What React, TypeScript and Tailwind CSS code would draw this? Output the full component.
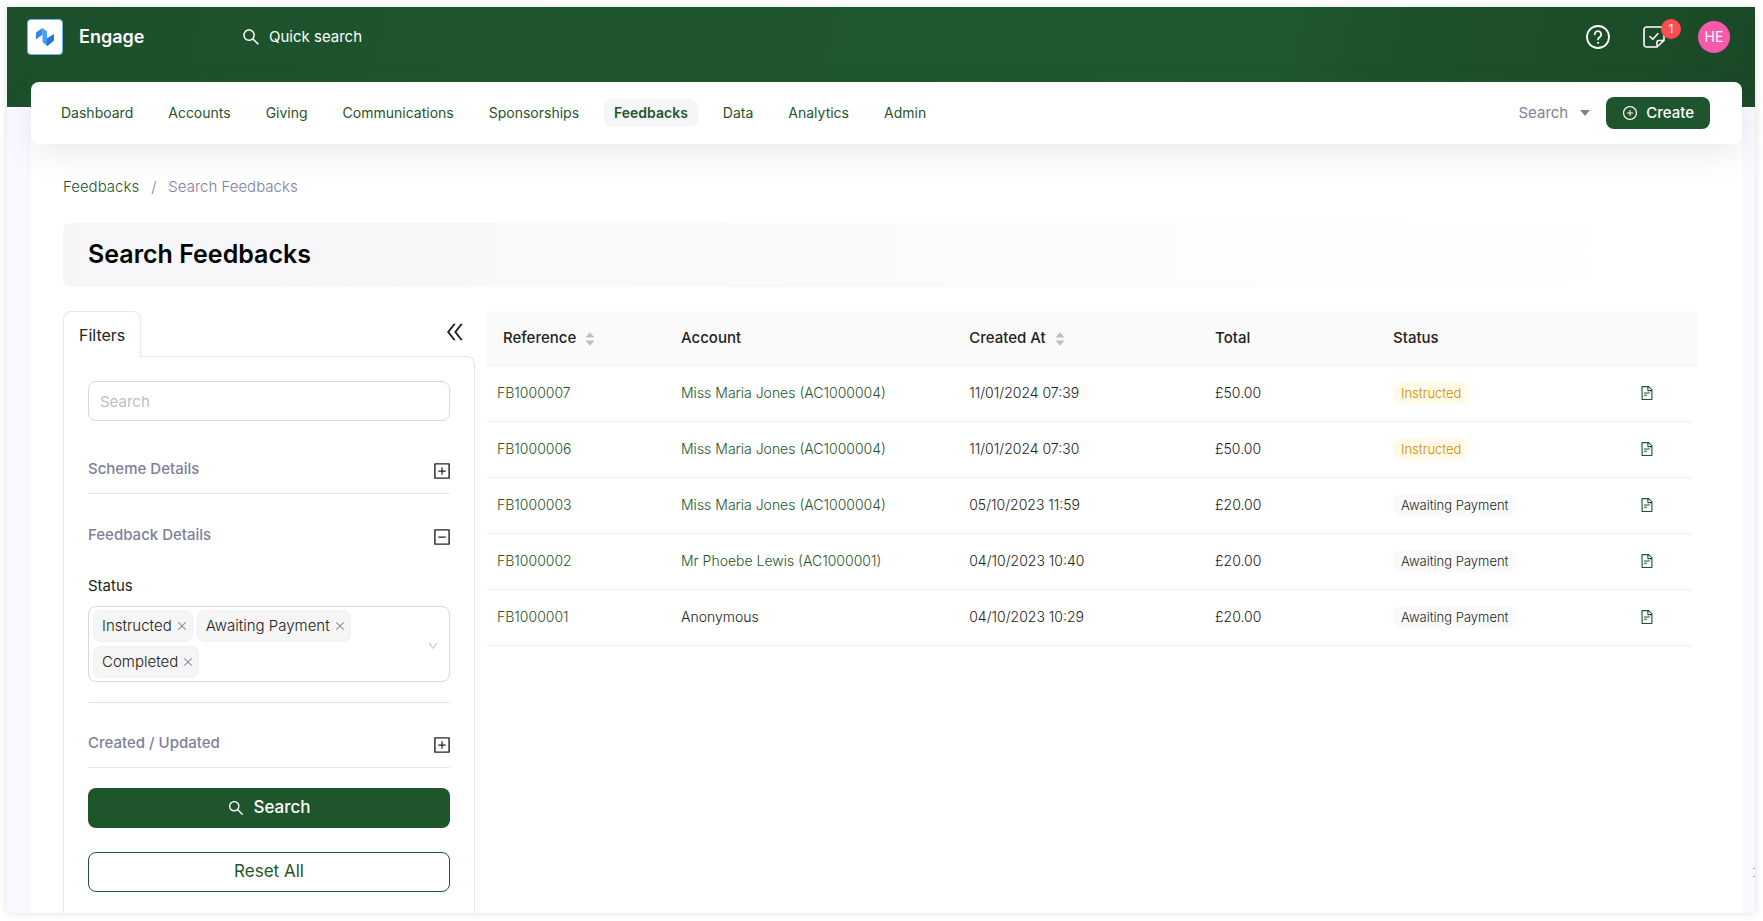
import {
  AiFillCaretDown,
  AiFillCaretUp,
  AiOutlineClose,
  AiOutlineDoubleLeft,
  AiOutlineDown,
  AiOutlineFileText,
  AiOutlineMinusSquare,
  AiOutlinePlusCircle,
  AiOutlinePlusSquare,
  AiOutlineSearch,
} from "react-icons/ai"

const navItems = [
  "Dashboard",
  "Accounts",
  "Giving",
  "Communications",
  "Sponsorships",
  "Feedbacks",
  "Data",
  "Analytics",
  "Admin",
]

const statusTags = ["Instructed", "Awaiting Payment", "Completed"]

const rows = [
  { ref: "FB1000007", account: "Miss Maria Jones (AC1000004)", created: "11/01/2024 07:39", total: "£50.00", status: "Instructed" },
  { ref: "FB1000006", account: "Miss Maria Jones (AC1000004)", created: "11/01/2024 07:30", total: "£50.00", status: "Instructed" },
  { ref: "FB1000003", account: "Miss Maria Jones (AC1000004)", created: "05/10/2023 11:59", total: "£20.00", status: "Awaiting Payment" },
  { ref: "FB1000002", account: "Mr Phoebe Lewis (AC1000001)", created: "04/10/2023 10:40", total: "£20.00", status: "Awaiting Payment" },
  { ref: "FB1000001", account: "Anonymous", created: "04/10/2023 10:29", total: "£20.00", status: "Awaiting Payment" },
]

function Logo() {
  return (
    <svg viewBox="0 0 18 18" className="size-[18px]" aria-hidden>
      <path d="M0 4.500 6.500 0v6.500L0 11.500z" fill="#2f86ea" />
      <path d="M6.500 0 11 3.500v14.500L6.500 14z" fill="#3ea2fb" />
      <path d="M11 10.500 18 6v6.500L11.500 18H11z" fill="#1f74d6" />
    </svg>
  )
}

function HelpIcon() {
  return (
    <svg viewBox="0 0 24 24" className="size-6" fill="none" stroke="currentColor" strokeWidth="1.800" strokeLinecap="round" aria-hidden>
      <circle cx="12" cy="12" r="11" />
      <path d="M8.800 9.300a3.200 3.200 0 1 1 5 2.700c-1.200.8-1.800 1.200-1.800 2.400" />
      <circle cx="12" cy="17.800" r="0.600" fill="currentColor" strokeWidth="1" />
    </svg>
  )
}

function TasksIcon() {
  return (
    <svg viewBox="0 0 22 22" className="size-[22px]" fill="none" stroke="currentColor" strokeWidth="1.600" strokeLinecap="round" strokeLinejoin="round" aria-hidden>
      <path d="M13.500 21H3.500A2.500 2.500 0 0 1 1 18.500v-15A2.500 2.500 0 0 1 3.500 1h15A2.500 2.500 0 0 1 21 3.500v11L14 21v-4.500a2 2 0 0 1 2-2h5" />
      <path d="m7 10.500 2.800 2.800 5-5.600" />
    </svg>
  )
}

function Header() {
  return (
    <header className="h-[100px] bg-[linear-gradient(105deg,#1c4f2a_0%,#1e552d_25%,#1f582e_72%,#1d522b_78%,#1b4927_100%)] text-white">
      <div className="flex h-[60px] items-center pl-5 pr-[25px]">
        <div className="flex w-[214px] items-center gap-4">
          <a href="#" aria-label="Home" className="flex size-9 items-center justify-center rounded border border-[#6db5f8] bg-white">
            <Logo />
          </a>
          <span className="text-lg font-semibold">Engage</span>
        </div>
        <button type="button" className="flex items-center gap-2 text-[15px]">
          <AiOutlineSearch className="size-5" />
          Quick search
        </button>
        <div className="ml-auto flex items-center gap-[33px]">
          <button type="button" aria-label="Help">
            <HelpIcon />
          </button>
          <button type="button" aria-label="Tasks" className="relative">
            <TasksIcon />
            <span className="absolute -right-4 -top-[7px] flex size-5 items-center justify-center rounded-full bg-[#ff4d4f] text-xs">1</span>
          </button>
          <button type="button" className="flex size-8 items-center justify-center rounded-full bg-[#f759ab] text-sm">
            HE
          </button>
        </div>
      </div>
    </header>
  )
}

function Navigation() {
  return (
    <nav className="relative z-10 flex h-[62px] items-center justify-between rounded-lg bg-white pl-5 pr-8 shadow-[0_10px_30px_rgba(82,100,120,0.12)]">
      <ul className="flex items-center gap-[15px] text-sm text-[#1f552d]">
        {navItems.map((item) => (
          <li key={item}>
            <a
              href="#"
              className={
                item === "Feedbacks"
                  ? "block rounded-lg bg-[#f6f6f9] px-2.5 py-1 font-semibold"
                  : "block px-2.5 py-1"
              }
            >
              {item}
            </a>
          </li>
        ))}
      </ul>
      <div className="flex items-center gap-4">
        <button type="button" className="flex items-center gap-3 text-[15px] text-[#7e7f9a]">
          Search
          <svg viewBox="0 0 10 6" className="h-1.5 w-2.5" fill="currentColor" aria-hidden>
            <path d="M0 0h10L5 6z" />
          </svg>
        </button>
        <button type="button" className="flex h-8 items-center gap-2 rounded-lg bg-[#1f552d] px-4 text-[15px] font-medium text-white">
          <AiOutlinePlusCircle className="size-4" />
          Create
        </button>
      </div>
    </nav>
  )
}

function FilterSection({ title, open = false }: { title: string; open?: boolean }) {
  const Icon = open ? AiOutlineMinusSquare : AiOutlinePlusSquare
  return (
    <button type="button" aria-expanded={open} className="flex w-full items-center justify-between text-[15px]/5 font-medium text-[#7e7f9a]">
      {title}
      <Icon className="-mr-0.5 mt-1 size-5 text-[#222]" />
    </button>
  )
}

function Filters() {
  return (
    <aside className="flex w-[412px] shrink-0 flex-col">
      <div className="flex h-[45px] items-end justify-between pr-2">
        <h2 className="z-10 -mb-px flex h-[46px] items-center rounded-t-lg border border-b-0 border-[#e6e6f0] bg-white px-[15px] text-base text-[#222]">
          Filters
        </h2>
        <button type="button" aria-label="Collapse filters" className="pb-3 text-[#222]">
          <AiOutlineDoubleLeft className="size-6" />
        </button>
      </div>
      <form className="flex-1 rounded-tr-lg border border-b-0 border-[#e6e6f0] px-6 pt-6 pb-5" onSubmit={(e) => e.preventDefault()}>
        <input
          type="text"
          aria-label="Search"
          placeholder="Search"
          className="h-10 w-full rounded-lg border border-[#d9d9d9] px-[11px] text-[15px] placeholder:text-[#bfbfbf]"
        />
        <div className="mt-9 border-b border-[#e6e6ee] pb-3">
          <FilterSection title="Scheme Details" />
        </div>
        <div className="mt-[29px] border-b border-[#e6e6ee] pb-5">
          <FilterSection title="Feedback Details" open />
          <div id="status-label" className="mt-[29px] text-[15px]/5 text-[#222]">
            Status
          </div>
          <div role="group" aria-labelledby="status-label" className="mt-2.5 flex items-center justify-between rounded-lg border border-[#d9d9d9] px-1 py-[3px]">
            <div className="flex flex-wrap gap-1">
              {statusTags.map((tag) => (
                <span key={tag} className="flex h-8 items-center gap-1 rounded-lg border border-[#f0f0f0] bg-[#f5f5f5] pl-2 pr-1 text-[15px] font-light text-[#222]">
                  {tag}
                  <button type="button" aria-label={`Remove ${tag}`} className="text-[#8c8c8c]">
                    <AiOutlineClose className="size-3" />
                  </button>
                </span>
              ))}
            </div>
            <button type="button" aria-label="Show statuses" className="px-1.5 text-[#bfbfbf]">
              <AiOutlineDown className="mt-1 size-3" />
            </button>
          </div>
        </div>
        <div className="mt-7 border-b border-[#e6e6ee] pb-3">
          <FilterSection title="Created / Updated" />
        </div>
        <button type="submit" className="mt-5 flex h-10 w-full items-center justify-center gap-2 rounded-lg bg-[#1f552d] text-[17px] font-medium text-white">
          <AiOutlineSearch className="size-[18px]" />
          Search
        </button>
        <button type="reset" className="mt-6 h-10 w-full rounded-lg border border-[#1f552d] text-[17px] text-[#1f552d]">
          Reset All
        </button>
      </form>
    </aside>
  )
}

function SortIcon() {
  return (
    <span className="ml-2 inline-flex flex-col align-middle text-[#bfbfbf]">
      <AiFillCaretUp className="size-3" />
      <AiFillCaretDown className="-mt-1 size-3" />
    </span>
  )
}

function FeedbackTable() {
  return (
    <table className="w-full table-fixed self-start text-left text-sm text-[#222]">
      <thead className="bg-[#fafafa]">
        <tr className="h-[54px] text-[15px] [&>th]:border-b [&>th]:border-[#f0f0f0] [&>th]:px-4 [&>th]:font-medium">
          <th className="w-[14.7%]">
            Reference
            <SortIcon />
          </th>
          <th className="w-[23.8%]">Account</th>
          <th className="w-[20.3%]">
            Created At
            <SortIcon />
          </th>
          <th className="w-[14.7%]">Total</th>
          <th className="w-[20.5%]">Status</th>
          <th aria-label="Details" />
          <th className="w-1.5 !px-0" aria-hidden />
        </tr>
      </thead>
      <tbody className="font-light">
        {rows.map((row) => (
          <tr key={row.ref} className="h-14 [&>td]:border-b [&>td]:border-[#f0f0f0] [&>td]:px-4">
            <td className="!px-2.5">
              <a href="#" className="text-[#1f552d]">{row.ref}</a>
            </td>
            <td>
              {row.account === "Anonymous" ? row.account : <a href="#" className="text-[#1f552d]">{row.account}</a>}
            </td>
            <td>{row.created}</td>
            <td>{row.total}</td>
            <td>
              <span
                className={
                  row.status === "Instructed"
                    ? "inline-block rounded-lg bg-[#fffbe6] px-2 text-[13px]/[22px] text-[#d48806]"
                    : "inline-block rounded-lg bg-[#fafafa] px-2 text-[13px]/[22px]"
                }
              >
                {row.status}
              </span>
            </td>
            <td>
              <a href="#" aria-label={`Open ${row.ref}`} className="-ml-0.5 block w-4 text-[#1f552d]">
                <AiOutlineFileText className="size-4" />
              </a>
            </td>
            <td className="!border-0 !p-0" />
          </tr>
        ))}
      </tbody>
    </table>
  )
}

export default function App() {
  return (
    <div className="flex min-h-screen flex-col bg-white pt-[7px] pr-2 pb-2 pl-[7px] font-['Inter','Open_Sans',sans-serif]">
      <div className="relative flex flex-1 flex-col bg-[#f9f9ff] shadow-[0_0_8px_rgba(0,0,0,0.12)]">
        <Header />
        <div className="-mt-[25px] ml-6 mr-[13px] flex flex-1 flex-col">
          <Navigation />
          <main className="-mt-2 flex flex-1 flex-col bg-white px-8 pt-[41px]">
            <div className="flex items-center gap-3 text-[15px]/5 font-light text-[#7e7f9a]">
              <a href="#" className="text-[#1f552d]">Feedbacks</a>
              <span>/</span>
              <span>Search Feedbacks</span>
            </div>
            <h1 className="mt-[26px] flex h-16 items-center rounded-lg bg-linear-to-r from-[#f6f6f9] to-white px-[25px] text-[25px] font-semibold text-black">
              Search Feedbacks
            </h1>
            <div className="mt-6 flex flex-1 gap-3 pr-3">
              <Filters />
              <FeedbackTable />
            </div>
          </main>
        </div>
        {/* Drawer handle peeking in from the right edge */}
        <div className="absolute right-0 bottom-9 flex flex-col gap-[7px]" aria-hidden>
          <span className="h-px w-0.5 bg-[#a5a5ad]" />
          <span className="h-px w-0.5 bg-[#a5a5ad]" />
        </div>
      </div>
    </div>
  )
}
